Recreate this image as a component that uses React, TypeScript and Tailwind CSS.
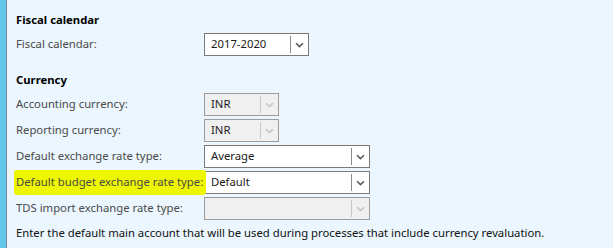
import React from "react";

type BoxProps = {
  value?: string;
  width: string;
  disabled?: boolean;
};

function Chevron({ disabled }: { disabled?: boolean }) {
  return (
    <svg width="9" height="6" viewBox="0 0 9 6" className="block">
      <path
        d="M1 1.2 L4.5 4.6 L8 1.2"
        fill="none"
        stroke={disabled ? "#c4c4c4" : "#5a5a5a"}
        strokeWidth="1.6"
      />
    </svg>
  );
}

function ComboBox({ value, width, disabled }: BoxProps) {
  return (
    <div
      className={`flex h-[23px] items-stretch border ${width} ${
        disabled ? "border-[#9c9c9c] bg-[#f0f0f0]" : "border-[#7a7a7a] bg-white"
      }`}
    >
      <div className="flex flex-1 items-center pl-[6px] text-[11.3px] text-[#1a1a1a]">
        {value}
      </div>
      <div className={`my-[2px] w-px ${disabled ? "bg-[#c8c8c8]" : "bg-[#8a8a8a]"}`} />
      <div className="flex w-[17px] items-center justify-center">
        <Chevron disabled={disabled} />
      </div>
    </div>
  );
}

function Row({
  label,
  children,
  highlight,
}: {
  label: string;
  children: React.ReactNode;
  highlight?: boolean;
}) {
  return (
    <div className="flex h-[23px] items-center">
      <div className="relative w-[188px] whitespace-nowrap text-[11.3px] text-[#4a4a4a]">
        {highlight && (
          <div className="absolute -left-[2px] -right-[2px] -top-[4px] -bottom-[4px] rounded-[3px] bg-[#eef700]" />
        )}
        <span className="relative">{label}</span>
      </div>
      {children}
    </div>
  );
}

export default function App() {
  return (
    <div
      className="flex h-[248px] w-[613px] overflow-hidden bg-[#ebf6fe]"
      style={{ fontFamily: '"Noto Sans", "Segoe UI", sans-serif' }}
    >
      <div className="w-[6px] bg-[#63c7ea]" />
      <div className="w-px bg-[#7d8a92]" />
      <div className="flex flex-1 flex-col pl-[9px] pt-[12px]">
        <div className="h-[16px] text-[11.3px] font-bold leading-[16px] text-black">
          Fiscal calendar
        </div>
        <div className="mt-[5px]">
          <Row label="Fiscal calendar:">
            <ComboBox value="2017-2020" width="w-[105px]" />
          </Row>
        </div>
        <div className="mt-[16px] h-[16px] text-[11.3px] font-bold leading-[16px] text-black">
          Currency
        </div>
        <div className="mt-[5px] flex flex-col gap-[3px]">
          <Row label="Accounting currency:">
            <ComboBox value="INR" width="w-[75px]" disabled />
          </Row>
          <Row label="Reporting currency:">
            <ComboBox value="INR" width="w-[75px]" disabled />
          </Row>
          <Row label="Default exchange rate type:">
            <ComboBox value="Average" width="w-[166px]" />
          </Row>
          <Row label="Default budget exchange rate type:" highlight>
            <ComboBox value="Default" width="w-[166px]" />
          </Row>
          <Row label="TDS import exchange rate type:">
            <ComboBox width="w-[166px]" disabled />
          </Row>
        </div>
        <div className="mt-[5px] h-[16px] text-[11.3px] leading-[16px] text-[#111]">
          Enter the default main account that will be used during processes that include currency revaluation.
        </div>
      </div>
    </div>
  );
}
